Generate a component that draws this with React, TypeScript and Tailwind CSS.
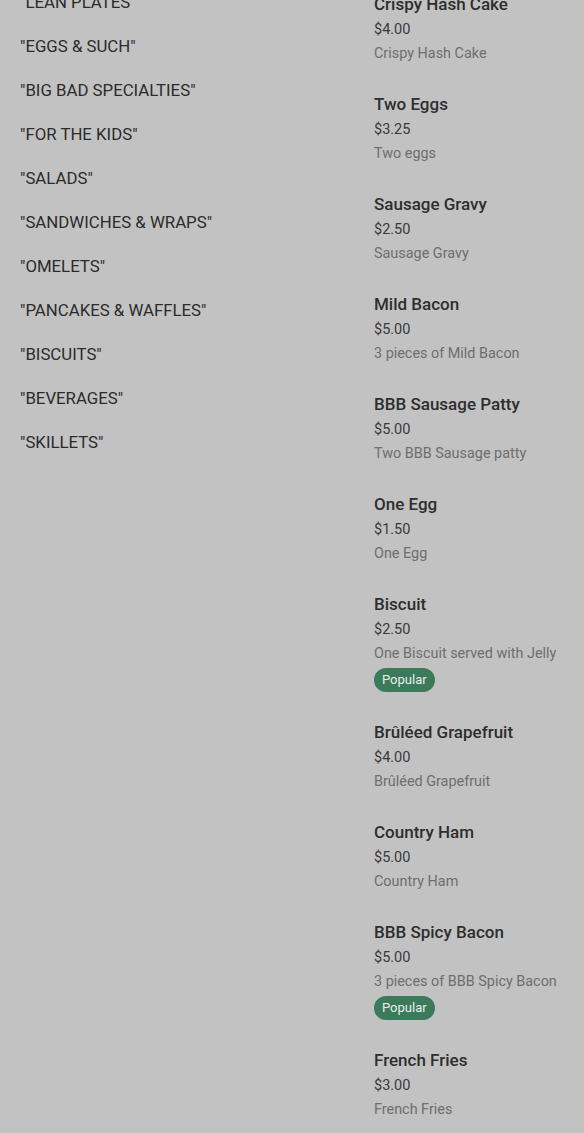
import React from "react";

const categories = [
  "LEAN PLATES",
  "EGGS & SUCH",
  "BIG BAD SPECIALTIES",
  "FOR THE KIDS",
  "SALADS",
  "SANDWICHES & WRAPS",
  "OMELETS",
  "PANCAKES & WAFFLES",
  "BISCUITS",
  "BEVERAGES",
  "SKILLETS",
];

type Item = { name: string; price: string; desc: string; popular?: boolean };

const items: Item[] = [
  { name: "Crispy Hash Cake", price: "$4.00", desc: "Crispy Hash Cake" },
  { name: "Two Eggs", price: "$3.25", desc: "Two eggs" },
  { name: "Sausage Gravy", price: "$2.50", desc: "Sausage Gravy" },
  { name: "Mild Bacon", price: "$5.00", desc: "3 pieces of Mild Bacon" },
  { name: "BBB Sausage Patty", price: "$5.00", desc: "Two BBB Sausage patty" },
  { name: "One Egg", price: "$1.50", desc: "One Egg" },
  { name: "Biscuit", price: "$2.50", desc: "One Biscuit served with Jelly", popular: true },
  { name: "Brûléed Grapefruit", price: "$4.00", desc: "Brûléed Grapefruit" },
  { name: "Country Ham", price: "$5.00", desc: "Country Ham" },
  { name: "BBB Spicy Bacon", price: "$5.00", desc: "3 pieces of BBB Spicy Bacon", popular: true },
  { name: "French Fries", price: "$3.00", desc: "French Fries" },
];

export default function App() {
  return (
    <div
      className="w-[584px] h-[1133px] overflow-hidden bg-[#c2c2c2]"
      style={{ fontFamily: "Roboto, 'Noto Sans', sans-serif" }}
    >
      <div className="flex mt-[-19px]">
        <div className="w-[374px] pl-[20px] flex flex-col">
          {categories.map((c) => (
            <div
              key={c}
              className="h-[44px] flex items-center text-[16.8px] text-[#2b2b2b]"
            >
              "{c}"
            </div>
          ))}
        </div>
        <div className="flex-1 flex flex-col pt-[11px]">
          {items.map((it) => (
            <div key={it.name} className="flex flex-col items-start pb-[26px]">
              <div className="h-[25px] leading-[25px] text-[17px] font-medium text-[#2e2e2e]">{it.name}</div>
              <div className="h-[24px] leading-[25px] text-[14.5px] text-[#3a3a3a]">{it.price}</div>
              <div className="h-[25px] leading-[25px] text-[14.4px] text-[#6e6e6e]">{it.desc}</div>
              {it.popular && (
                <div className="mt-[2px] mb-[2px] h-[24px] px-[8px] rounded-full bg-[#3b7a5b] text-[#e6f0ea] text-[13px] flex items-center">
                  Popular
                </div>
              )}
            </div>
          ))}
        </div>
      </div>
    </div>
  );
}
